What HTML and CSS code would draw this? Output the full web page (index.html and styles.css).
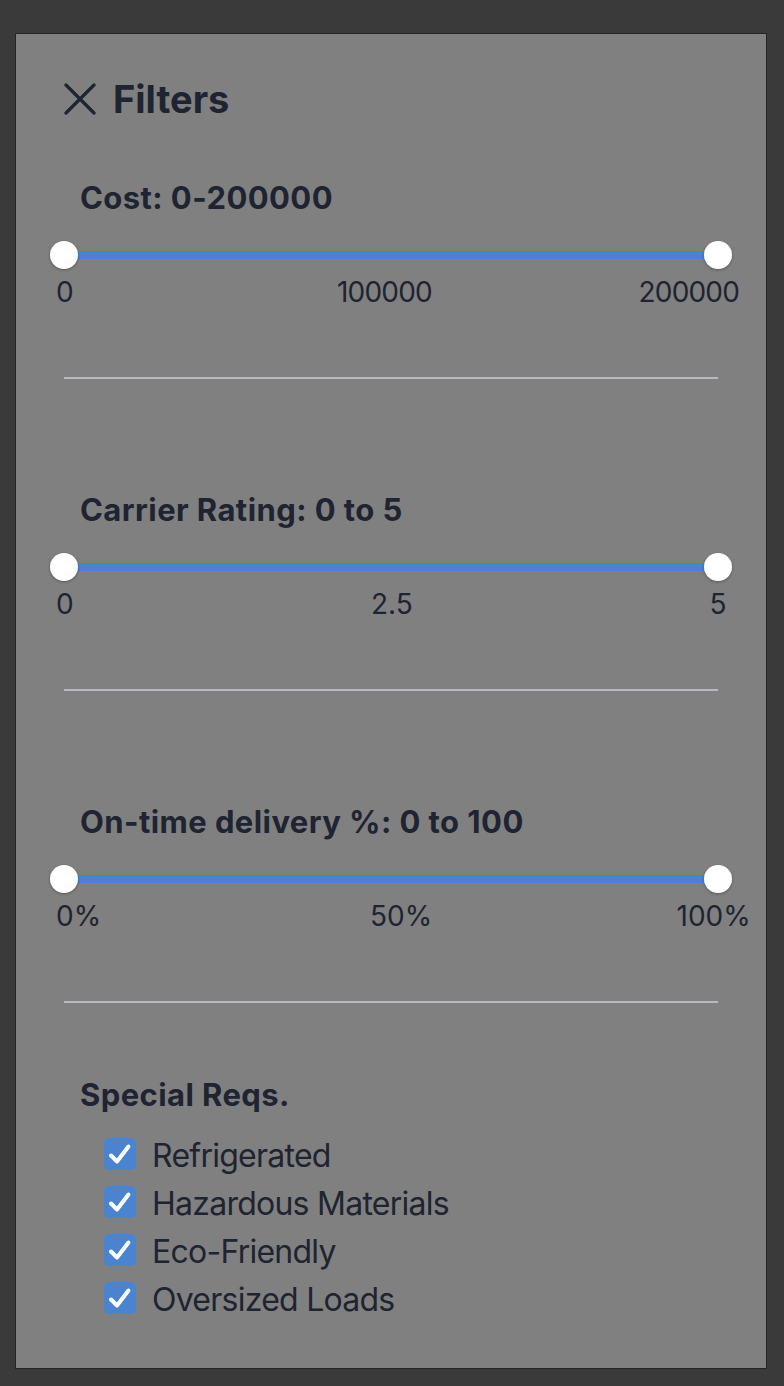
FILE: index.html
```html
<!DOCTYPE html>
<html lang="en">
<head>
<meta charset="utf-8">
<title>Filters</title>
<link rel="stylesheet" href="styles.css">
</head>
<body>
<div class="panel">
  <div class="title-row">
    <svg class="close-icon" width="32" height="32" viewBox="0 0 32 32" aria-hidden="true">
      <path d="M2 2 L30 30 M30 2 L2 30" fill="none" stroke="currentColor" stroke-width="3.2" stroke-linecap="round"/>
    </svg>
    <h1 class="title">Filters</h1>
  </div>

  <section class="filter filter-first">
    <h2 class="filter-heading">Cost: 0-200000</h2>
    <div class="range">
      <div class="range-track"></div>
      <span class="thumb thumb-start"></span>
      <span class="thumb thumb-end"></span>
    </div>
    <div class="marks marks-cost"><span>0</span><span>100000</span><span>200000</span></div>
    <hr class="divider">
  </section>

  <section class="filter">
    <h2 class="filter-heading">Carrier Rating: 0 to 5</h2>
    <div class="range">
      <div class="range-track"></div>
      <span class="thumb thumb-start"></span>
      <span class="thumb thumb-end"></span>
    </div>
    <div class="marks marks-rating"><span>0</span><span>2.5</span><span>5</span></div>
    <hr class="divider">
  </section>

  <section class="filter">
    <h2 class="filter-heading">On-time delivery %: 0 to 100</h2>
    <div class="range">
      <div class="range-track"></div>
      <span class="thumb thumb-start"></span>
      <span class="thumb thumb-end"></span>
    </div>
    <div class="marks marks-percent"><span>0%</span><span>50%</span><span>100%</span></div>
    <hr class="divider">
  </section>

  <section class="special">
    <h2 class="filter-heading">Special Reqs.</h2>
    <ul class="checklist">
      <li class="check-row">
        <span class="checkbox"><svg width="32" height="32" viewBox="0 0 32 32" aria-hidden="true"><path d="M7 17.5 L13 23.5 L24.5 8.5" fill="none" stroke="#fff" stroke-width="4" stroke-linecap="round" stroke-linejoin="round"/></svg></span>
        <span class="check-label">Refrigerated</span>
      </li>
      <li class="check-row">
        <span class="checkbox"><svg width="32" height="32" viewBox="0 0 32 32" aria-hidden="true"><path d="M7 17.5 L13 23.5 L24.5 8.5" fill="none" stroke="#fff" stroke-width="4" stroke-linecap="round" stroke-linejoin="round"/></svg></span>
        <span class="check-label">Hazardous Materials</span>
      </li>
      <li class="check-row">
        <span class="checkbox"><svg width="32" height="32" viewBox="0 0 32 32" aria-hidden="true"><path d="M7 17.5 L13 23.5 L24.5 8.5" fill="none" stroke="#fff" stroke-width="4" stroke-linecap="round" stroke-linejoin="round"/></svg></span>
        <span class="check-label">Eco-Friendly</span>
      </li>
      <li class="check-row">
        <span class="checkbox"><svg width="32" height="32" viewBox="0 0 32 32" aria-hidden="true"><path d="M7 17.5 L13 23.5 L24.5 8.5" fill="none" stroke="#fff" stroke-width="4" stroke-linecap="round" stroke-linejoin="round"/></svg></span>
        <span class="check-label">Oversized Loads</span>
      </li>
    </ul>
  </section>
</div>
</body>
</html>
```
FILE: styles.css
```css
* { box-sizing: border-box; }

body {
  margin: 0;
  background: #3a3a3a;
  font-family: Inter, "Noto Sans", sans-serif;
  color: #1e2431;
}

.panel {
  margin: 33px 0 0 15px;
  width: 752px;
  height: 1336px;
  border: 1px solid #242424;
  background: #808080;
  padding: 46px 48px 0 48px;
}

.title-row {
  display: flex;
  align-items: center;
  gap: 17px;
  height: 38px;
}

.close-icon {
  display: block;
  flex: none;
  color: #1e2431;
}

.title {
  margin: 0;
  font-size: 38px;
  line-height: 38px;
  font-weight: 700;
}

.filter-first { margin-top: 63.5px; }
.filter + .filter { margin-top: 114.5px; }

.filter-heading {
  margin: 0;
  padding-left: 16px;
  font-size: 31px;
  line-height: 31px;
  font-weight: 700;
  letter-spacing: 0.42px;
}

.range {
  position: relative;
  height: 28px;
  margin-top: 28.5px;
  padding-top: 10px;
}

.range-track {
  height: 8px;
  background: #4a82cc;
}

.thumb {
  position: absolute;
  top: 0;
  width: 28px;
  height: 28px;
  border-radius: 50%;
  background: #fff;
  box-shadow: 0 1px 3px rgba(0, 0, 0, 0.3);
}

.thumb-start { left: -14px; }
.thumb-end { right: -14px; }

.marks {
  display: grid;
  margin-top: 9px;
  margin-left: -8px;
  font-size: 28px;
  line-height: 28px;
  font-weight: 400;
  white-space: nowrap;
}

.marks-cost {
  grid-template-columns: 281px 301.5px auto;
  letter-spacing: -0.8px;
}
.marks-rating { grid-template-columns: 315px 338.5px auto; }
.marks-percent { grid-template-columns: 314px 306.5px auto; }

.divider {
  margin: 71px 0 0 0;
  border: 0;
  height: 2px;
  background: #b6b9bf;
}

.special { margin-top: 76px; }

.checklist {
  list-style: none;
  margin: 20px 0 0 0;
  padding: 0 0 0 40px;
}

.check-row {
  display: flex;
  align-items: center;
  gap: 16px;
  height: 48px;
}

.checkbox {
  flex: none;
  width: 32px;
  height: 32px;
  border-radius: 5px;
  background: #4a84cf;
}

.checkbox svg { display: block; }

.check-label {
  font-size: 32px;
  line-height: 48px;
  font-weight: 400;
  letter-spacing: -0.75px;
  padding-top: 3px;
}
```
